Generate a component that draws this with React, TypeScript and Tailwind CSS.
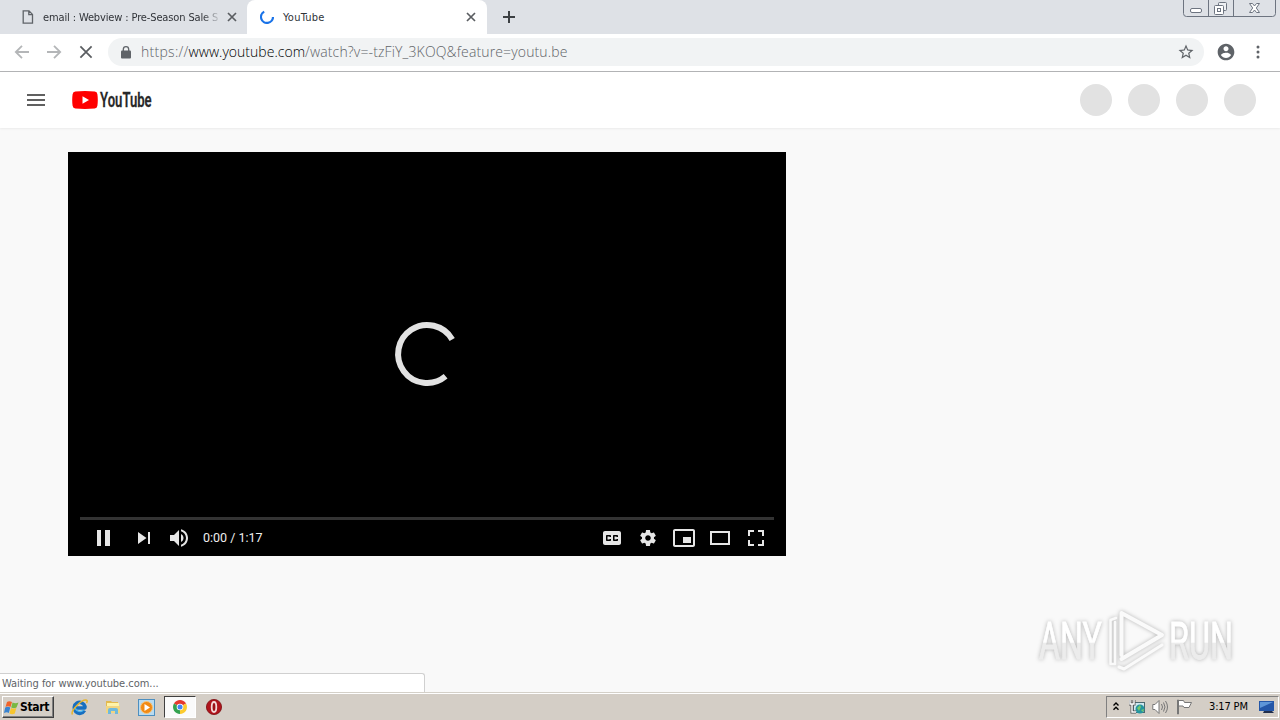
import type { ReactNode } from 'react';

const UI = "font-['DejaVu_Sans_Condensed','DejaVu_Sans',sans-serif] [font-stretch:condensed]";

function PlayerIcon({ children }: { children: ReactNode }) {
  return (
    <svg width="36" height="36" viewBox="0 0 36 36" fill="#e6e6e6" fillRule="evenodd">
      {children}
    </svg>
  );
}

function Close({ size, width }: { size: number; width: number }) {
  return (
    <svg width={size} height={size} viewBox="0 0 10 10" stroke="#5a5d61" strokeWidth={width}>
      <path d="M1 1L9 9M9 1L1 9" />
    </svg>
  );
}

function TabStrip() {
  return (
    <div className="flex h-[34px] shrink-0 bg-[#dee1e6]">
      <div className="flex w-[247px] items-center rounded-br-lg pl-[22px]">
        <svg width="12" height="14" viewBox="0 0 12 14" fill="none" stroke="#5f6368" strokeWidth="1.3">
          <path d="M1.2.8H7l3.5 3.6v8.8H1.2zM6.8.8v3.8h3.7" />
        </svg>
        <div className={`${UI} ml-[9px] h-4 w-[176px] overflow-hidden text-[11px] leading-[17px] whitespace-nowrap text-[#303338] tracking-[-0.13px] [mask-image:linear-gradient(to_right,black_160px,transparent_178px)]`}>
          email : Webview : Pre-Season Sale S
        </div>
        <div className="ml-2"><Close size={10} width={1.7} /></div>
      </div>
      <div className="flex w-[240px] items-center rounded-t-lg bg-white pl-[13px]">
        <svg width="14" height="14" viewBox="0 0 14 14" fill="none" stroke="#1a73e8" strokeWidth="2.2">
          <path d="M4.2 1.6A6 6 0 1 0 13 7" />
        </svg>
        <div className={`${UI} ml-[9px] w-[175px] text-[11px] leading-[17px] text-[#303338] tracking-[0.25px]`}>YouTube</div>
        <div className="ml-[8px]"><Close size={10} width={1.7} /></div>
      </div>
      <div className="flex w-[44px] items-center pl-4">
        <svg width="12" height="12" viewBox="0 0 12 12" stroke="#3c4043" strokeWidth="2">
          <path d="M6 0v12M0 6h12" />
        </svg>
      </div>
      <svg className="mr-1 ml-auto" width="93" height="17" viewBox="0 0 93 17" fill="none" stroke="#6d7480">
        <path d="M.5 0v13.5q0 3 3 3H89.5q3 0 3-3V0M25.5 0v16M50.5 0v16" />
        <rect x="7.500" y="8.500" width="11" height="4" rx="1.500" fill="#fff" />
        <rect x="35.500" y="2.500" width="8" height="8" rx="1" fill="#eef0f3" />
        <rect x="31.500" y="5.500" width="9" height="9" rx="1" fill="#fff" />
        <rect x="34.500" y="8.500" width="3" height="3" />
        <path fill="#fff" d="M66.500 3.500h3l2 2.500 2-2.500h3l-3.200 4.500 3.200 4.500h-3l-2-2.500-2 2.500h-3l3.200-4.500z" />
      </svg>
    </div>
  );
}

function Toolbar() {
  return (
    <div className="flex h-[38px] shrink-0 items-center border-b border-[#b3b4b6] bg-white pb-px pl-[14px]">
      <svg width="16" height="14" viewBox="0 0 16 14" fill="none" stroke="#b4b6b8" strokeWidth="1.800">
        <path d="M15 7H2M8 .8L1.800 7 8 13.200" />
      </svg>
      <svg className="ml-4" width="16" height="14" viewBox="0 0 16 14" fill="none" stroke="#b4b6b8" strokeWidth="1.800">
        <path d="M1 7h13M8 .8L14.200 7 8 13.200" />
      </svg>
      <div className="ml-[17px]"><Close size={14} width={1.25} /></div>
      <div className="ml-[15px] flex h-7 w-[1096px] items-center rounded-full bg-[#f1f3f4] pl-[13px]">
        <svg width="10" height="13" viewBox="0 0 10 13">
          <rect y="4.500" width="10" height="8" rx="1" fill="#5f6368" />
          <path d="M2.300 5V3.400a2.700 2.700 0 0 1 5.400 0V5" fill="none" stroke="#5f6368" strokeWidth="1.300" />
        </svg>
        <div className="ml-[10px] text-[14px] leading-5 font-light whitespace-nowrap text-[#5f6368] font-['Open_Sans','Noto_Sans',sans-serif]">
          <span className="tracking-[0.28px]">https://</span>
          <span className="tracking-[0.02px] text-black">www.youtube.com</span>
          <span className="tracking-[0.14px]">/watch?v=-tzFiY_3KOQ&amp;feature=youtu.be</span>
        </div>
        <svg className="mr-[9px] ml-auto" width="18" height="18" viewBox="0 0 24 24" fill="#5f6368">
          <path d="M22 9.240l-7.190-.62L12 2 9.190 8.630 2 9.240l5.460 4.730L5.820 21 12 17.270 18.180 21l-1.630-7.030L22 9.240zM12 15.400l-3.760 2.270 1-4.280-3.320-2.880 4.380-.38L12 6.100l1.710 4.040 4.380.38-3.320 2.880 1 4.280L12 15.400z" />
        </svg>
      </div>
      <svg className="ml-[12px]" width="20" height="20" viewBox="0 0 24 24" fill="#5f6368">
        <path d="M12 2C6.480 2 2 6.480 2 12s4.480 10 10 10 10-4.480 10-10S17.520 2 12 2zm0 3c1.660 0 3 1.340 3 3s-1.340 3-3 3-3-1.340-3-3 1.340-3 3-3zm0 14.200c-2.500 0-4.710-1.280-6-3.220.03-1.990 4-3.080 6-3.080 1.990 0 5.970 1.090 6 3.080-1.290 1.940-3.500 3.220-6 3.220z" />
      </svg>
      <svg className="ml-[20px]" width="4" height="14" viewBox="0 0 4 14" fill="#5f6368">
        <circle cx="2" cy="2" r="1.500" /><circle cx="2" cy="7" r="1.500" /><circle cx="2" cy="12" r="1.500" />
      </svg>
    </div>
  );
}

function Masthead() {
  return (
    <div className="flex h-14 shrink-0 items-center bg-white pr-6 pl-[27px] shadow-[0_1px_2px_rgba(0,0,0,0.06)]">
      <svg width="18" height="12" viewBox="0 0 18 12" fill="#606060">
        <path d="M0 0h18v2H0zM0 5h18v2H0zM0 10h18v2H0z" />
      </svg>
      <svg className="ml-[27px]" width="88" height="28" viewBox="0 -4 88 28">
        <path d="M3.300 1.500Q12.900.7 22.700 1.500Q25.200 1.900 25.400 4.200Q26.200 10 25.400 15.800Q25 18.200 22.700 18.500Q12.900 19.300 3.300 18.500Q1 18.200.6 15.800Q-.2 10 .6 4.200Q1 1.900 3.300 1.500Z" fill="#f00" />
        <path d="M10.500 6.200L17 10l-6.500 3.800z" fill="#fff" />
        <text transform="translate(28 17.200) scale(.68 1)" textLength="76" lengthAdjust="spacingAndGlyphs" fontFamily="Roboto, sans-serif" fontWeight="600" fontSize="20" fill="#282828" stroke="#282828" strokeWidth=".25">YouTube</text>
      </svg>
      <div className="ml-auto flex gap-4">
        {[0, 1, 2, 3].map((i) => <div key={i} className="size-8 rounded-full bg-[#e2e2e2]" />)}
      </div>
    </div>
  );
}

function Player() {
  return (
    <div className="flex h-[404px] w-[718px] flex-col bg-black">
      <div className="flex h-[365px] items-center justify-center pt-[39px]">
        <svg width="70" height="70" viewBox="392 319 70 70" fill="none" stroke="#e2e2e2" strokeWidth="6">
          <path d="M445.600 376.300A29 29 0 1 1 452.200 339.400" />
        </svg>
      </div>
      <div className="mx-3 h-[3px] bg-[#333]" />
      <div className="flex h-9 items-center pr-3 pl-[17px]">
        <PlayerIcon><path d="M12 10h4v16h-4zM20 10h5v16h-5z" /></PlayerIcon>
        <div className="ml-[5px]">
          <PlayerIcon><path d="M12 24l8.500-6L12 12zM22 12v12h2V12z" /></PlayerIcon>
        </div>
        <PlayerIcon>
          <path d="M8 21h4l5 5V10l-5 5H8zM19 14v8c1.480-.68 2.500-2.230 2.500-4s-1.020-3.260-2.500-4zM19 11.290c2.890.86 5 3.540 5 6.710s-2.110 5.850-5 6.710v2.060c4.010-.91 7-4.490 7-8.770s-2.990-7.860-7-8.770z" />
        </PlayerIcon>
        <div className="ml-[5px] text-[12.500px] leading-9 whitespace-nowrap text-[#eee] font-['Roboto',sans-serif]">0:00 / 1:17</div>
        <div className="ml-auto flex">
          <PlayerIcon>
            <path d="M11 11c-1.110 0-2 .9-2 2v10c0 1.100.89 2 2 2h14c1.100 0 2-.9 2-2V13c0-1.100-.9-2-2-2zM17 17h-1.500v-.5h-2v3h2V19H17v1c0 .55-.45 1-1 1h-3c-.55 0-1-.45-1-1v-4c0-.55.45-1 1-1h3c.55 0 1 .45 1 1zM24 17h-1.500v-.5h-2v3h2V19H24v1c0 .55-.45 1-1 1h-3c-.55 0-1-.45-1-1v-4c0-.55.45-1 1-1h3c.55 0 1 .45 1 1z" />
          </PlayerIcon>
          <PlayerIcon>
            <path d="m23.940 18.780c.03-.25.05-.51.05-.78 0-.27-.02-.52-.05-.78l1.680-1.320c.15-.12.19-.33.09-.51l-1.600-2.760c-.09-.17-.31-.24-.48-.17l-1.990.8c-.41-.32-.86-.58-1.350-.78l-.3-2.120c-.02-.19-.19-.33-.39-.33h-3.200c-.2 0-.36.14-.39.33l-.3 2.120c-.48.2-.93.47-1.350.78l-1.990-.8c-.18-.07-.39 0-.48.17l-1.600 2.760c-.1.17-.05.39.09.51l1.680 1.320c-.03.25-.05.52-.05.78 0 .26.02.52.05.78l-1.680 1.320c-.15.12-.19.33-.09.51l1.600 2.760c.09.17.31.24.48.17l1.990-.8c.41.32.86.58 1.350.78l.3 2.120c.02.19.19.33.39.33h3.200c.2 0 .36-.14.39-.33l.3-2.120c.48-.2.93-.47 1.350-.78l1.990.8c.18.07.39 0 .48-.17l1.600-2.760c.09-.17.05-.39-.09-.51zm-5.940 2.010c-1.540 0-2.800-1.250-2.800-2.800 0-1.540 1.250-2.800 2.800-2.800 1.540 0 2.800 1.250 2.800 2.800 0 1.540-1.250 2.800-2.800 2.800z" />
          </PlayerIcon>
          <PlayerIcon>
            <path d="M25 17h-8v6h8zM29 25V10.980C29 9.880 28.100 9 27 9H9c-1.100 0-2 .88-2 1.980V25c0 1.100.9 2 2 2h18c1.100 0 2-.9 2-2zm-2 .02H9V10.970h18z" />
          </PlayerIcon>
          <PlayerIcon><path d="M8 11h20v14H8zM10 13v10h16V13z" /></PlayerIcon>
          <PlayerIcon>
            <path d="M10 16h2v-4h4v-2h-6zM20 10v2h4v4h2v-6zM24 24h-4v2h6v-6h-2zM12 20h-2v6h6v-2h-4z" />
          </PlayerIcon>
        </div>
      </div>
    </div>
  );
}

function Watermark() {
  return (
    <svg className="absolute top-[532px] right-[40px] [filter:drop-shadow(0_0_2px_rgba(0,0,0,0.28))]" width="208" height="72" viewBox="1032 604 208 72">
      <defs>
        <linearGradient id="fade" x1="0" y1="0" x2="0" y2="1">
          <stop offset="0.520" stopColor="#fff" />
          <stop offset="0.530" stopColor="#ececec" />
        </linearGradient>
      </defs>
      <g fill="url(#fade)" stroke="url(#fade)" strokeWidth=".8" fontFamily="Roboto, sans-serif" fontSize="51">
        <text transform="translate(1039 659) scale(.64 1)" textLength="98" lengthAdjust="spacingAndGlyphs">ANY</text>
        <text transform="translate(1169 659) scale(.64 1)" textLength="100" lengthAdjust="spacingAndGlyphs">RUN</text>
      </g>
      <g fill="none" stroke="#fafafa" strokeWidth="4" strokeLinejoin="round" strokeLinecap="round">
        <path d="M1121.500 655V613L1162 635L1121.500 659" />
        <path d="M1116 618L1110.500 620V664H1115V622" strokeWidth="2.500" />
        <path d="M1119 667L1124 669L1162 645" strokeWidth="3" />
      </g>
    </svg>
  );
}

function QuickLaunch() {
  return (
    <div className="flex h-full items-center">
      <svg className="ml-[17px]" width="17" height="17" viewBox="0 0 17 17" fill="none">
        <path d="M13.500 11.500A5.500 5.500 0 1 1 14 7.500Q14 9 13.500 9H4" stroke="#176fc0" strokeWidth="3.500" />
        <path d="M12.500 11A5 5 0 0 1 4 8" stroke="#4db6ee" strokeWidth="1.400" />
        <path d="M1.500 15.500C-1 12 11-.5 15.800 1.300Q16.700 2 15.500 4" stroke="#e8b52c" strokeWidth="1.500" />
      </svg>
      <svg className="ml-[17px]" width="16" height="16" viewBox="0 0 16 16">
        <path d="M1 2h5l1 1h6v11H1z" fill="#e3b94e" />
        <path d="M2 4h12v7H2z" fill="#fff3a8" />
        <path d="M1 7h14v7H1z" fill="#f2d580" />
        <path d="M3 15v-4q0-2 2-2h6q2 0 2 2v4h-3v-3H6v3z" fill="#6fb9dc" />
      </svg>
      <svg className="ml-[17px]" width="17" height="17" viewBox="0 0 17 17">
        <rect x=".5" y=".5" width="16" height="16" fill="#b9dbf0" stroke="#4d8fc0" />
        <circle cx="8.500" cy="8.500" r="6" fill="#f18a14" stroke="#f8c479" />
        <path d="M6.500 5l5.500 3.500L6.500 12z" fill="#fff" />
      </svg>
      <div className="ml-[9px] flex h-[22px] w-[32px] items-center justify-center border border-t-[#404040] border-r-white border-b-white border-l-[#404040] bg-[#fafafa]">
        <svg width="14" height="14" viewBox="0 0 14 14">
          <path d="M7 7L.94 3.500A7 7 0 0 1 13.060 3.500z" fill="#e5392e" />
          <path d="M7 7L.94 3.500A7 7 0 0 0 7 14z" fill="#34a24f" />
          <path d="M7 7l6.060-3.500A7 7 0 0 1 7 14z" fill="#fccb2e" />
          <circle cx="7" cy="7" r="3.300" fill="#fff" /><circle cx="7" cy="7" r="2.500" fill="#4285f4" />
        </svg>
      </div>
      <svg className="ml-[10px]" width="16" height="16" viewBox="0 0 16 16">
        <circle cx="8" cy="8" r="7.600" fill="#b0141c" stroke="#7b0c10" strokeWidth=".8" />
        <ellipse cx="8" cy="8" rx="2.300" ry="5" fill="#9b1015" stroke="#f3d8d8" strokeWidth="1.800" />
      </svg>
    </div>
  );
}

function Tray() {
  return (
    <div className="mr-[1px] ml-auto flex h-[22px] w-[173px] items-center border border-t-[#808080] border-r-white border-b-white border-l-[#808080] pl-[6px]">
      <svg className="-mt-[2px]" width="6" height="9" viewBox="0 0 6 9" fill="none" stroke="#000" strokeWidth="1.400">
        <path d="M.5 3.500L3 1l2.500 2.500M.5 7.800L3 5.300l2.500 2.500" />
      </svg>
      <svg className="ml-[10px]" width="17" height="16" viewBox="0 0 17 16">
        <rect x="4.500" y="3.500" width="11" height="10" fill="#cfe8ef" stroke="#4c6870" />
        <circle cx="11" cy="10" r="4.500" fill="#2494a0" />
        <path d="M8 9l3-3 1 2-2 4zM12 11l3-1-1 3z" fill="#76c86a" />
        <path d="M1 1v4h4V1M3 5v8h4" fill="none" stroke="#555" strokeWidth="3" />
        <path d="M1 1v4h4V1M3 5v8h4" fill="none" stroke="#fff" strokeWidth="1.400" />
      </svg>
      <svg className="ml-[6px]" width="17" height="16" viewBox="0 0 17 16" fill="none" stroke="#777" strokeWidth="1">
        <path d="M.8 5.500H3L7 1.500v13L3 10.500H.8z" fill="#fff" />
        <path d="M9.500 5q2 3 0 6M11.500 3.500q3 4.500 0 9M13.500 2q4 6 0 12" />
      </svg>
      <svg className="ml-[7px]" width="17" height="16" viewBox="0 0 17 16" stroke="#777" fill="#fff">
        <path d="M2.500 1.500h5l1 2h7l-2.500 5h-5l-1-1.500H2.500z" />
        <path d="M1.500 1v14h1V1z" />
      </svg>
      <div className={`${UI} ml-[16px] w-[42px] text-[11px] whitespace-nowrap text-black tracking-[-0.15px]`}>3:17 PM</div>
      <svg className="ml-[8px]" width="16" height="14" viewBox="0 0 16 14">
        <path d="M0 1h15v10H0z" fill="#2457a8" />
        <path d="M1 2h13L1 8z" fill="#5e96d8" />
        <path d="M5 11h8l2 2H4z" fill="#202e4c" />
      </svg>
    </div>
  );
}

function Taskbar() {
  return (
    <div className="flex h-7 shrink-0 items-center border-t border-[#d4d0c8] bg-[#d4cec6] pt-px shadow-[inset_0_1px_0_white]">
      <div className={`${UI} ml-[2px] flex h-[22px] w-[52px] items-center border border-t-white border-r-[#404040] border-b-[#404040] border-l-white pl-px text-[12px] font-bold tracking-[-0.35px] text-black shadow-[inset_-1px_-1px_0_#808080]`}>
        <svg className="mr-px shrink-0" width="15" height="15" viewBox="0 0 15 15">
          <path d="M3 2q2-1.500 5 0L6.500 7Q4 5.500 1.500 7z" fill="#f0632a" />
          <path d="M8.500 2.500q3 1.500 6 0L12.500 7.500Q10 9 7.200 7.500z" fill="#79b843" />
          <path d="M1.200 7.500Q4 6 6.300 7.500L4.800 13Q3 11.500 0 13z" fill="#3983d0" />
          <path d="M7 8q2.500 1.500 5.300 0L10.800 13.500q-2.500 1.500-5.400 0z" fill="#f7c52e" />
        </svg>
        Start
      </div>
      <QuickLaunch />
      <Tray />
    </div>
  );
}

export default function App() {
  return (
    <div className="flex h-[720px] w-[1280px] flex-col overflow-hidden bg-[#f9f9f9]">
      <TabStrip />
      <Toolbar />
      <div className="relative flex h-[620px] shrink-0 flex-col">
        <Masthead />
        <div className="pt-6 pl-[68px]"><Player /></div>
        <div className={`${UI} mt-auto h-[19px] w-[425px] rounded-tr-[3px] border-t border-r border-[#d0d0d0] bg-white pl-[2px] text-[11px] leading-[19px] tracking-[-0.04px] text-[#606367]`}>
          Waiting for www.youtube.com...
        </div>
        <Watermark />
      </div>
      <Taskbar />
    </div>
  );
}
